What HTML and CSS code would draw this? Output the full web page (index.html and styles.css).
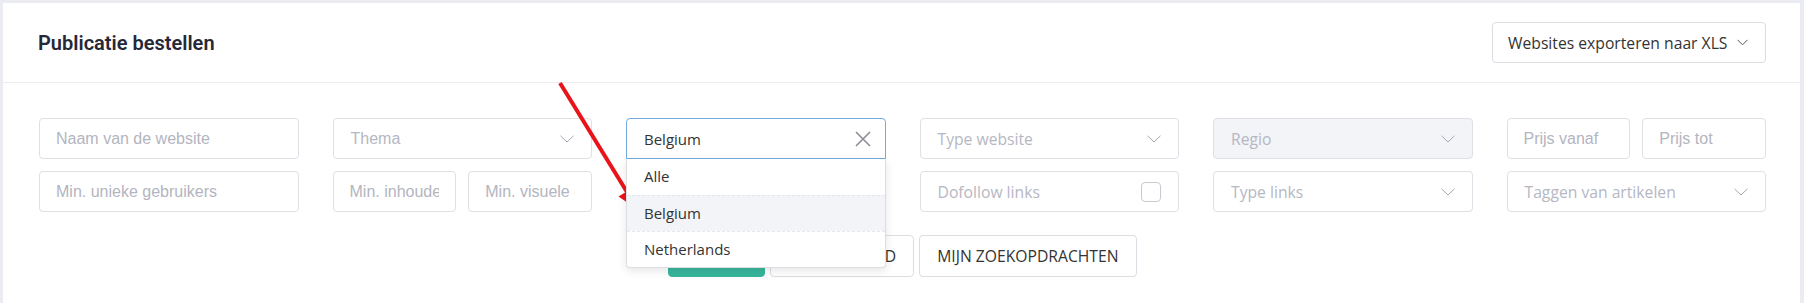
FILE: index.html
```html
<!DOCTYPE html>
<html lang="nl">
<head>
    <meta charset="UTF-8">
    <meta name="viewport" content="width=device-width, initial-scale=1.0">
    <title>Publicatie bestellen</title>
    <link rel="stylesheet" href="styles.css">
</head>
<body>
    <div class="card">
        <div class="card-header">
            <h1>Publicatie bestellen</h1>
            <button class="export-btn">
                Websites exporteren naar XLS
                <svg width="11" height="7" viewBox="0 0 11 7"><polyline points="0.5,0.8 5.5,5.8 10.5,0.8" fill="none" stroke="#555" stroke-width="1"/></svg>
            </button>
        </div>

        <div class="card-body">
            <div class="filters">
                <input class="field text" type="text" placeholder="Naam van de website">

                <div class="field select">
                    <span class="placeholder arial">Thema</span>
                    <svg class="chevron" width="14" height="8" viewBox="0 0 14 8"><polyline points="0.5,0.8 7,7 13.5,0.8"/></svg>
                </div>

                <div class="select-wrap">
                    <div class="field select open">
                        <span class="value">Belgium</span>
                        <svg width="16" height="16" viewBox="0 0 16 16"><path d="M1 1 L15 15 M15 1 L1 15" stroke="#8b8d97" stroke-width="1.6" fill="none"/></svg>
                    </div>
                    <ul class="dropdown">
                        <li>Alle</li>
                        <li class="active">Belgium</li>
                        <li>Netherlands</li>
                    </ul>
                </div>

                <div class="field select">
                    <span class="placeholder">Type website</span>
                    <svg class="chevron" width="14" height="8" viewBox="0 0 14 8"><polyline points="0.5,0.8 7,7 13.5,0.8"/></svg>
                </div>

                <div class="field select disabled">
                    <span class="placeholder">Regio</span>
                    <svg class="chevron" width="14" height="8" viewBox="0 0 14 8"><polyline points="0.5,0.8 7,7 13.5,0.8"/></svg>
                </div>

                <div class="pair">
                    <input class="field text" type="text" placeholder="Prijs vanaf">
                    <input class="field text" type="text" placeholder="Prijs tot">
                </div>

                <input class="field text" type="text" placeholder="Min. unieke gebruikers">

                <div class="pair">
                    <input class="field text" type="text" placeholder="Min. inhoude">
                    <input class="field text" type="text" placeholder="Min. visuele elementen">
                </div>

                <div class="field select">
                    <span class="placeholder">Alle</span>
                </div>

                <div class="field select">
                    <span class="placeholder">Dofollow links</span>
                    <span class="checkbox"></span>
                </div>

                <div class="field select">
                    <span class="placeholder">Type links</span>
                    <svg class="chevron" width="14" height="8" viewBox="0 0 14 8"><polyline points="0.5,0.8 7,7 13.5,0.8"/></svg>
                </div>

                <div class="field select">
                    <span class="placeholder">Taggen van artikelen</span>
                    <svg class="chevron" width="14" height="8" viewBox="0 0 14 8"><polyline points="0.5,0.8 7,7 13.5,0.8"/></svg>
                </div>
            </div>

            <div class="actions">
                <button class="btn primary">ZOEKEN</button>
                <button class="btn">WIS ZOEKVELD</button>
                <button class="btn">MIJN ZOEKOPDRACHTEN</button>
            </div>
        </div>
    </div>

    <svg class="annotation" width="1804" height="303" viewBox="0 0 1804 303">
        <line x1="560" y1="83" x2="627" y2="192" stroke="#e8141a" stroke-width="4"/>
        <polygon points="638,210 618.5,196.5 634.5,186.8" fill="#e8141a"/>
    </svg>
</body>
</html>
```

FILE: styles.css
```css
* {
    box-sizing: border-box;
}
body {
    margin: 0;
    padding: 3px 4px 0 3px;
    background-color: #ebebf2;
    font-family: "Open Sans", Arial, sans-serif;
    color: #333;
    overflow: hidden;
}
.card {
    background-color: #fff;
    min-height: 320px;
}
.card-header {
    height: 80px;
    display: flex;
    align-items: center;
    justify-content: space-between;
    padding: 0 34px 0 35px;
    border-bottom: 1px solid #ebedf2;
}
.card-header h1 {
    margin: 0;
    font-family: Roboto, sans-serif;
    font-size: 20px;
    font-weight: 600;
    color: #262837;
}
.export-btn {
    height: 41px;
    width: 274px;
    display: flex;
    align-items: center;
    gap: 10px;
    padding: 0 15px;
    background: #fff;
    border: 1px solid #dcdde3;
    border-radius: 4px;
    font-family: "Open Sans", sans-serif;
    font-size: 15.7px;
    color: #333;
    white-space: nowrap;
}
.card-body {
    padding: 35px 34px 0 36px;
}
.filters {
    display: grid;
    grid-template-columns: repeat(6, 1fr);
    column-gap: 34px;
    row-gap: 12px;
}
.field {
    height: 41px;
    width: 100%;
    min-width: 0;
    border: 1px solid #dfe0e6;
    border-radius: 4px;
    background: #fff;
}
.text {
    padding: 0 16px;
    font-family: "Liberation Sans", Arial, sans-serif;
    font-size: 16px;
    color: #333;
    outline: none;
}
.text::placeholder {
    color: #b3b5c0;
}
.select {
    display: flex;
    align-items: center;
    justify-content: space-between;
    padding: 0 17px;
    font-size: 15.7px;
}
.placeholder {
    color: #b5b7c3;
}
.placeholder.arial {
    font-family: "Liberation Sans", Arial, sans-serif;
    font-size: 16px;
}
.chevron polyline {
    fill: none;
    stroke: #a5a7b2;
    stroke-width: 1;
}
.disabled {
    background: #f3f4f8;
}
.checkbox {
    width: 20px;
    height: 20px;
    border: 1px solid #c8cad2;
    border-radius: 4px;
}
.pair {
    display: flex;
    gap: 12px;
}
.select-wrap {
    position: relative;
}
.open {
    border-color: #74aadf;
    border-radius: 4px 4px 0 0;
    padding-right: 14px;
    font-size: 15px;
}
.value {
    color: #333;
}
.dropdown {
    position: absolute;
    top: 41px;
    left: 0;
    right: 0;
    margin: 0;
    padding: 0;
    list-style: none;
    background: #fff;
    border: 1px solid #dcdde3;
    border-top: none;
    border-radius: 0 0 4px 4px;
    box-shadow: 0 3px 10px rgba(0, 0, 0, 0.1);
    z-index: 5;
}
.dropdown li {
    height: 36px;
    line-height: 34px;
    padding: 0 17px;
    font-size: 15px;
    color: #333;
}
.dropdown li + li {
    border-top: 1px dashed #e6e7ec;
}
.dropdown li.active {
    background: #f3f4f7;
}
.actions {
    display: flex;
    justify-content: center;
    gap: 5px;
    margin-top: 23px;
}
.btn {
    height: 42px;
    padding: 0 17px;
    background: #fff;
    border: 1px solid #dcdde3;
    border-radius: 4px;
    font-family: "Open Sans", sans-serif;
    font-size: 15.7px;
    color: #333;
}
.btn.primary {
    background: #37b79c;
    border-color: #37b79c;
    color: #fff;
}
.annotation {
    position: absolute;
    top: 0;
    left: 0;
    pointer-events: none;
}
```
